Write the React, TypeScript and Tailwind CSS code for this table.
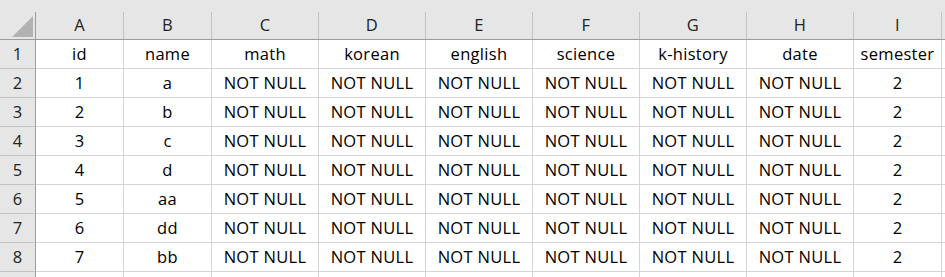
const cols = ['A', 'B', 'C', 'D', 'E', 'F', 'G', 'H', 'I'];
const widths = ['w-[88px]', 'w-[88px]', 'w-[107px]', 'w-[107px]', 'w-[107px]', 'w-[107px]', 'w-[107px]', 'w-[107px]', 'w-[88px]'];
const header = ['id', 'name', 'math', 'korean', 'english', 'science', 'k-history', 'date', 'semester'];
const names = ['a', 'b', 'c', 'd', 'aa', 'dd', 'bb'];

const rows: string[][] = [
  header,
  ...names.map((n, i) => [String(i + 1), n, 'NOT NULL', 'NOT NULL', 'NOT NULL', 'NOT NULL', 'NOT NULL', 'NOT NULL', '2']),
  ['', '', '', '', '', '', '', '', ''],
];

export default function App() {
  return (
    <div className="w-[945px] h-[277px] overflow-hidden bg-white text-[16.5px] tracking-[0.3px] text-black" style={{ fontFamily: '"Open Sans", "Noto Sans CJK KR", sans-serif' }}>
      <div className="h-[12px] bg-[#e6e6e6]" />
      {/* column headers */}
      <div className="flex h-[28px] bg-[#e6e6e6] border-b border-[#9b9b9b]">
        <div className="w-[36px] shrink-0 border-r border-[#9b9b9b] relative">
          <svg className="absolute left-[12px] top-[4px]" width="22" height="21" viewBox="0 0 22 21">
            <polygon points="21,0 21,21 0,21" fill="#b2b2b2" />
          </svg>
        </div>
        {cols.map((c, i) => (
          <div key={c} className={`${widths[i]} shrink-0 border-r border-[#c4c4c4] flex items-center justify-center text-[#222]`}>
            {c}
          </div>
        ))}
        <div className="flex-1" />
      </div>
      {rows.map((r, ri) => (
        <div key={ri} className="flex h-[29px]">
          <div className="w-[36px] shrink-0 bg-[#e6e6e6] border-r border-[#9b9b9b] border-b border-b-[#c4c4c4] flex items-center justify-center text-[#222]">
            {ri < 8 ? ri + 1 : ''}
          </div>
          {r.map((v, ci) => (
            <div key={ci} className={`${widths[ci]} shrink-0 border-r border-b border-[#d4d4d4] flex items-center justify-center whitespace-nowrap`}>
              {v}
            </div>
          ))}
          <div className="flex-1 border-b border-[#d4d4d4]" />
        </div>
      ))}
    </div>
  );
}
